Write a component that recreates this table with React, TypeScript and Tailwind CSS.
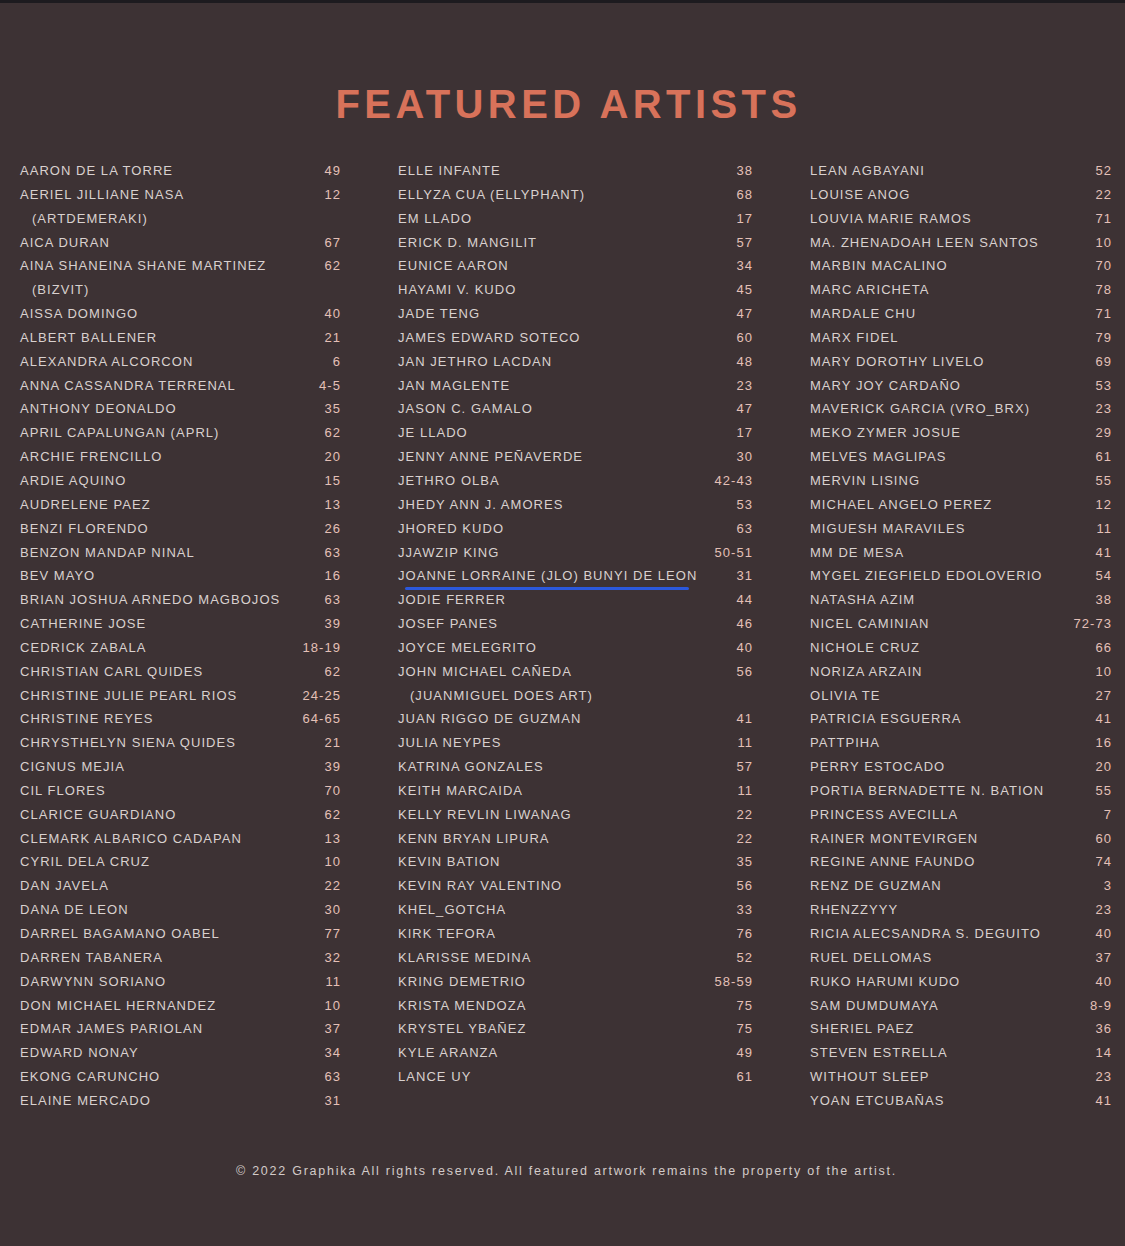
import React from "react";

type Artist = { name: string; sub?: string; page: string; mark?: boolean };

const COL_ONE: Artist[] = [
  { name: "AARON DE LA TORRE", page: "49" },
  { name: "AERIEL JILLIANE NASA", sub: "(ARTDEMERAKI)", page: "12" },
  { name: "AICA DURAN", page: "67" },
  { name: "AINA SHANEINA SHANE MARTINEZ", sub: "(BIZVIT)", page: "62" },
  { name: "AISSA DOMINGO", page: "40" },
  { name: "ALBERT BALLENER", page: "21" },
  { name: "ALEXANDRA ALCORCON", page: "6" },
  { name: "ANNA CASSANDRA TERRENAL", page: "4-5" },
  { name: "ANTHONY DEONALDO", page: "35" },
  { name: "APRIL CAPALUNGAN (APRL)", page: "62" },
  { name: "ARCHIE FRENCILLO", page: "20" },
  { name: "ARDIE AQUINO", page: "15" },
  { name: "AUDRELENE PAEZ", page: "13" },
  { name: "BENZI FLORENDO", page: "26" },
  { name: "BENZON MANDAP NINAL", page: "63" },
  { name: "BEV MAYO", page: "16" },
  { name: "BRIAN JOSHUA ARNEDO MAGBOJOS", page: "63" },
  { name: "CATHERINE JOSE", page: "39" },
  { name: "CEDRICK ZABALA", page: "18-19" },
  { name: "CHRISTIAN CARL QUIDES", page: "62" },
  { name: "CHRISTINE JULIE PEARL RIOS", page: "24-25" },
  { name: "CHRISTINE REYES", page: "64-65" },
  { name: "CHRYSTHELYN SIENA QUIDES", page: "21" },
  { name: "CIGNUS MEJIA", page: "39" },
  { name: "CIL FLORES", page: "70" },
  { name: "CLARICE GUARDIANO", page: "62" },
  { name: "CLEMARK ALBARICO CADAPAN", page: "13" },
  { name: "CYRIL DELA CRUZ", page: "10" },
  { name: "DAN JAVELA", page: "22" },
  { name: "DANA DE LEON", page: "30" },
  { name: "DARREL BAGAMANO OABEL", page: "77" },
  { name: "DARREN TABANERA", page: "32" },
  { name: "DARWYNN SORIANO", page: "11" },
  { name: "DON MICHAEL HERNANDEZ", page: "10" },
  { name: "EDMAR JAMES PARIOLAN", page: "37" },
  { name: "EDWARD NONAY", page: "34" },
  { name: "EKONG CARUNCHO", page: "63" },
  { name: "ELAINE MERCADO", page: "31" },
];

const COL_TWO: Artist[] = [
  { name: "ELLE INFANTE", page: "38" },
  { name: "ELLYZA CUA (ELLYPHANT)", page: "68" },
  { name: "EM LLADO", page: "17" },
  { name: "ERICK D. MANGILIT", page: "57" },
  { name: "EUNICE AARON", page: "34" },
  { name: "HAYAMI V. KUDO", page: "45" },
  { name: "JADE TENG", page: "47" },
  { name: "JAMES EDWARD SOTECO", page: "60" },
  { name: "JAN JETHRO LACDAN", page: "48" },
  { name: "JAN MAGLENTE", page: "23" },
  { name: "JASON C. GAMALO", page: "47" },
  { name: "JE LLADO", page: "17" },
  { name: "JENNY ANNE PEÑAVERDE", page: "30" },
  { name: "JETHRO OLBA", page: "42-43" },
  { name: "JHEDY ANN J. AMORES", page: "53" },
  { name: "JHORED KUDO", page: "63" },
  { name: "JJAWZIP KING", page: "50-51" },
  { name: "JOANNE LORRAINE (JLO) BUNYI DE LEON", page: "31", mark: true },
  { name: "JODIE FERRER", page: "44" },
  { name: "JOSEF PANES", page: "46" },
  { name: "JOYCE MELEGRITO", page: "40" },
  { name: "JOHN MICHAEL CAÑEDA", sub: "(JUANMIGUEL DOES ART)", page: "56" },
  { name: "JUAN RIGGO DE GUZMAN", page: "41" },
  { name: "JULIA NEYPES", page: "11" },
  { name: "KATRINA GONZALES", page: "57" },
  { name: "KEITH MARCAIDA", page: "11" },
  { name: "KELLY REVLIN LIWANAG", page: "22" },
  { name: "KENN BRYAN LIPURA", page: "22" },
  { name: "KEVIN BATION", page: "35" },
  { name: "KEVIN RAY VALENTINO", page: "56" },
  { name: "KHEL_GOTCHA", page: "33" },
  { name: "KIRK TEFORA", page: "76" },
  { name: "KLARISSE MEDINA", page: "52" },
  { name: "KRING DEMETRIO", page: "58-59" },
  { name: "KRISTA MENDOZA", page: "75" },
  { name: "KRYSTEL YBAÑEZ", page: "75" },
  { name: "KYLE ARANZA", page: "49" },
  { name: "LANCE UY", page: "61" },
];

const COL_THREE: Artist[] = [
  { name: "LEAN AGBAYANI", page: "52" },
  { name: "LOUISE ANOG", page: "22" },
  { name: "LOUVIA MARIE RAMOS", page: "71" },
  { name: "MA. ZHENADOAH LEEN SANTOS", page: "10" },
  { name: "MARBIN MACALINO", page: "70" },
  { name: "MARC ARICHETA", page: "78" },
  { name: "MARDALE CHU", page: "71" },
  { name: "MARX FIDEL", page: "79" },
  { name: "MARY DOROTHY LIVELO", page: "69" },
  { name: "MARY JOY CARDAÑO", page: "53" },
  { name: "MAVERICK GARCIA (VRO_BRX)", page: "23" },
  { name: "MEKO ZYMER JOSUE", page: "29" },
  { name: "MELVES MAGLIPAS", page: "61" },
  { name: "MERVIN LISING", page: "55" },
  { name: "MICHAEL ANGELO PEREZ", page: "12" },
  { name: "MIGUESH MARAVILES", page: "11" },
  { name: "MM DE MESA", page: "41" },
  { name: "MYGEL ZIEGFIELD EDOLOVERIO", page: "54" },
  { name: "NATASHA AZIM", page: "38" },
  { name: "NICEL CAMINIAN", page: "72-73" },
  { name: "NICHOLE CRUZ", page: "66" },
  { name: "NORIZA ARZAIN", page: "10" },
  { name: "OLIVIA TE", page: "27" },
  { name: "PATRICIA ESGUERRA", page: "41" },
  { name: "PATTPIHA", page: "16" },
  { name: "PERRY ESTOCADO", page: "20" },
  { name: "PORTIA BERNADETTE N. BATION", page: "55" },
  { name: "PRINCESS AVECILLA", page: "7" },
  { name: "RAINER MONTEVIRGEN", page: "60" },
  { name: "REGINE ANNE FAUNDO", page: "74" },
  { name: "RENZ DE GUZMAN", page: "3" },
  { name: "RHENZZYYY", page: "23" },
  { name: "RICIA ALECSANDRA S. DEGUITO", page: "40" },
  { name: "RUEL DELLOMAS", page: "37" },
  { name: "RUKO HARUMI KUDO", page: "40" },
  { name: "SAM DUMDUMAYA", page: "8-9" },
  { name: "SHERIEL PAEZ", page: "36" },
  { name: "STEVEN ESTRELLA", page: "14" },
  { name: "WITHOUT SLEEP", page: "23" },
  { name: "YOAN ETCUBAÑAS", page: "41" },
];

function ArtistRow({ artist }: { artist: Artist }) {
  return (
    <li className="flex justify-between gap-4">
      <div className="relative">
        <span className="block">{artist.name}</span>
        {artist.sub && <span className="block pl-3">{artist.sub}</span>}
        {/* active link underline */}
        {artist.mark && (
          <span className="absolute left-[7px] right-[8px] bottom-[-2px] h-[3px] rounded-full bg-[#2b58dc]" />
        )}
      </div>
      <span className="shrink-0 font-medium text-[#e4c0b7]">{artist.page}</span>
    </li>
  );
}

function ArtistColumn({ items }: { items: Artist[] }) {
  return (
    <ul className="flex flex-col">
      {items.map((a) => (
        <ArtistRow key={a.name} artist={a} />
      ))}
    </ul>
  );
}

export default function App() {
  return (
    <div className="min-h-[1246px] bg-[#3d3234] font-['Liberation_Sans',Arial,sans-serif]">
      <div className="h-[3px] bg-[#1d1b1f]" />

      <h1 className="mt-[81px] pl-[12px] text-center text-[40px] leading-[40px] font-bold tracking-[0.11em] text-[#d8725a]">
        FEATURED ARTISTS
      </h1>

      <div className="mt-[35px] grid grid-cols-[321px_355px_302px] gap-x-[57px] pl-[20px] text-[13px] leading-[23.85px] tracking-[0.08em] text-[#d9d1cf]">
        <ArtistColumn items={COL_ONE} />
        <ArtistColumn items={COL_TWO} />
        <ArtistColumn items={COL_THREE} />
      </div>

      <p className="mt-[50px] pl-[8px] text-center text-[12.5px] leading-[16px] tracking-[0.14em] text-[#d3cbc9]">
        © 2022 Graphika All rights reserved. All featured artwork remains the property of the artist.
      </p>
    </div>
  );
}
